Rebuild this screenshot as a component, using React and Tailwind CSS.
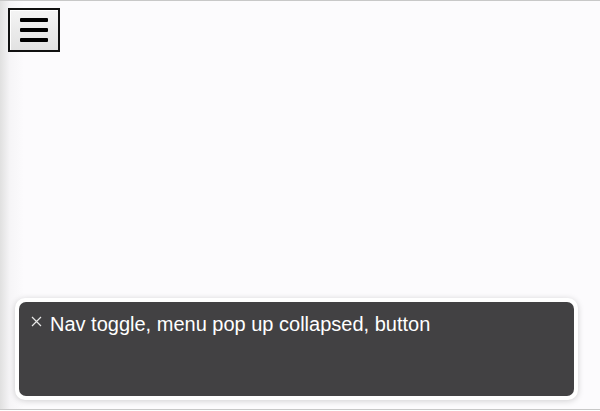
import React from 'react';

const App = () => {
  return (
    <div
      className="w-[600px] h-[410px] flex flex-col border-t border-b border-[#c8c8c8] bg-[linear-gradient(to_right,#e0e0e0,#f6f5f7_10px,#fcfbfd_24px)]"
      style={{ fontFamily: '"Liberation Sans", Arial, sans-serif' }}
    >
      <div className="pt-[7px] pl-[8px]">
        <button className="w-[52px] h-[44px] border-2 border-[#111] bg-[linear-gradient(to_bottom,#f4f4f4,#e2e2e2)] shadow-[inset_1px_1px_0_#fff] flex flex-col items-center justify-center gap-[6px]">
          <span className="block w-[28px] h-[4px] bg-black rounded-[1px]" />
          <span className="block w-[28px] h-[4px] bg-black rounded-[1px]" />
          <span className="block w-[28px] h-[4px] bg-black rounded-[1px]" />
        </button>
      </div>

      <div className="flex-1" />

      <div className="ml-[15px] mb-[9px] w-[563px] h-[102px] rounded-[10px] border-[4px] border-white bg-white shadow-[0_1px_6px_rgba(0,0,0,0.18)]">
        <div className="h-full rounded-[7px] bg-[#424143] flex items-start pt-[10px] pl-[12px]">
          <svg width="11" height="11" viewBox="0 0 11 11" className="mt-[4px] mr-[8px] shrink-0">
            <path d="M1 1 L10 10 M10 1 L1 10" stroke="#e8e8e8" strokeWidth="1.2" />
          </svg>
          <span className="text-white text-[20px] leading-[24px]">
            Nav toggle, menu pop up collapsed, button
          </span>
        </div>
      </div>
    </div>
  );
};

export default App;
